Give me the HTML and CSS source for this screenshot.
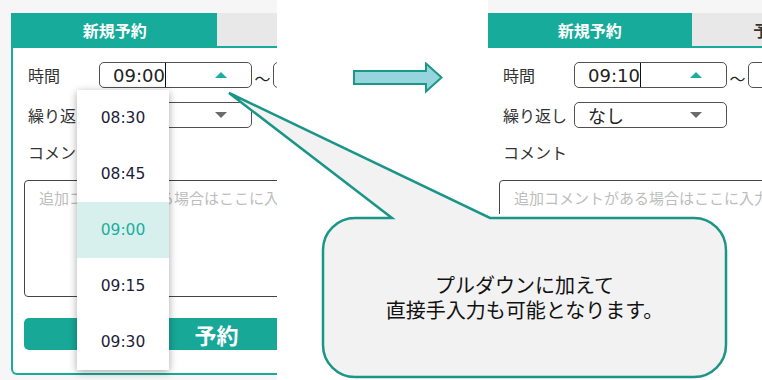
FILE: index.html
```html
<!DOCTYPE html>
<html lang="ja">
<head>
<meta charset="utf-8">
<title>予約フォーム</title>
<link rel="stylesheet" href="styles.css">
</head>
<body>
<div class="stage">
  <div class="shot shot-left">
    <div class="panel">
      <div class="tabs"><div class="tab active">新規予約</div><div class="tab">予約の確認</div></div>
      <div class="body">
        <div class="row">
          <span class="label">時間</span>
          <div class="field"><span class="val">09:00</span><span class="caret"></span><span class="tri up"></span></div>
          <span class="tilde">～</span>
          <div class="field end"></div>
        </div>
        <div class="row">
          <span class="label">繰り返し</span>
          <div class="field"><span class="val">なし</span><span class="tri down"></span></div>
        </div>
        <div class="label comment-label">コメント</div>
        <div class="textarea">追加コメントがある場合はここに入力</div>
        <button class="submit">予約</button>
      </div>
      <ul class="dropdown">
        <li>08:30</li>
        <li>08:45</li>
        <li class="sel">09:00</li>
        <li>09:15</li>
        <li>09:30</li>
      </ul>
    </div>
  </div>
  <div class="middle">
    <svg class="arrow" width="90" height="32" viewBox="0 0 90 32"><path d="M1 9 H73 V1.5 L88.5 15.5 L73 29.5 V22 H1 Z" fill="#96d5de" stroke="#1a988a" stroke-width="2" stroke-linejoin="miter"/></svg>
  </div>
  <div class="shot shot-right">
    <div class="panel">
      <div class="tabs"><div class="tab active">新規予約</div><div class="tab">予約の確認</div></div>
      <div class="body">
        <div class="row">
          <span class="label">時間</span>
          <div class="field"><span class="val">09:10</span><span class="caret"></span><span class="tri up"></span></div>
          <span class="tilde">～</span>
          <div class="field end"></div>
        </div>
        <div class="row">
          <span class="label">繰り返し</span>
          <div class="field"><span class="val">なし</span><span class="tri down"></span></div>
        </div>
        <div class="label comment-label">コメント</div>
        <div class="textarea">追加コメントがある場合はここに入力</div>
        <button class="submit">予約</button>
      </div>
    </div>
  </div>
</div>
<div class="callout-layer">
  <svg class="callout-shape" width="762" height="380" viewBox="0 0 762 380"><path d="M392 218 L229 93 L490 218 L694 218 A32 32 0 0 1 726 250 L726 345 A32 32 0 0 1 694 377 L355 377 A32 32 0 0 1 323 345 L323 250 A32 32 0 0 1 355 218 Z" fill="#f2f2f2" stroke="#1a9587" stroke-width="2.5" stroke-linejoin="miter"/></svg>
  <div class="callout-text">プルダウンに加えて<br>直接手入力も可能となります。</div>
</div>
</body>
</html>
```
FILE: styles.css
```css
body {
  margin: 0;
  width: 762px;
  height: 380px;
  overflow: hidden;
  position: relative;
  background: #fff;
  font-family: "Noto Sans CJK JP", sans-serif;
}
.stage {
  display: flex;
  align-items: flex-start;
  height: 380px;
}
.shot {
  height: 380px;
  overflow: hidden;
  box-sizing: border-box;
  padding-top: 13px;
  background: #f6f6f6;
}
.shot-left {
  width: 277px;
  flex: none;
  padding-left: 11px;
}
.middle {
  width: 211px;
  flex: none;
  box-sizing: border-box;
  padding: 62px 0 0 76px;
}
.arrow { display: block; }
.shot-right {
  flex: 1;
  min-width: 0;
  height: 214px;
}
.panel {
  position: relative;
  width: 411px;
  box-sizing: border-box;
  border: 2px solid #17ab9b;
  border-top: 0;
  border-radius: 0 0 6px 6px;
  background: #fff;
}
.shot-right .panel {
  border-left: 0;
  width: 409px;
}
.tabs {
  display: flex;
  height: 33px;
  border-bottom: 2px solid #17ab9b;
}
.tab {
  flex: 1;
  display: flex;
  align-items: center;
  justify-content: center;
  font-size: 16px;
  font-weight: 700;
  background: #e8e8e8;
  color: #333;
}
.tab.active {
  background: #17ab9b;
  color: #fff;
}
.body {
  padding: 14px 11px 23px;
}
.row {
  display: flex;
  align-items: center;
  height: 26px;
}
.row + .row { margin-top: 14px; }
.label {
  width: 75px;
  flex: none;
  box-sizing: border-box;
  padding-left: 4px;
  font-size: 16px;
  color: #333;
  white-space: nowrap;
}
.field {
  width: 153px;
  height: 26px;
  flex: none;
  box-sizing: border-box;
  border: 1.5px solid #505050;
  border-radius: 5px;
  display: flex;
  align-items: center;
  padding-left: 13px;
}
.field.end { width: 150px; }
.val {
  font-family: "DejaVu Sans", "Noto Sans CJK JP", sans-serif;
  font-size: 18px;
  color: #222;
}
.caret {
  align-self: stretch;
  border-left: 1.5px solid #111;
}
.tri {
  margin-left: auto;
  margin-right: 24px;
  width: 0;
  height: 0;
  border-left: 6px solid transparent;
  border-right: 6px solid transparent;
}
.tri.up { border-bottom: 6px solid #1aae9e; }
.tri.down { border-top: 6px solid #6a6a6a; }
.tilde {
  width: 21px;
  flex: none;
  text-align: center;
  font-size: 16px;
  color: #222;
  align-self: flex-end;
  line-height: 20px;
}
.comment-label {
  margin-top: 15px;
  line-height: 18px;
}
.textarea {
  margin-top: 19px;
  height: 117px;
  box-sizing: border-box;
  border: 1.5px solid #444;
  border-radius: 4px;
  padding: 6px 0 0 14px;
  font-size: 15px;
  color: #bdbdbd;
  white-space: nowrap;
  overflow: hidden;
}
.submit {
  display: block;
  width: 100%;
  margin-top: 21px;
  height: 32px;
  padding: 0;
  border: 0;
  border-radius: 5px;
  background: #17a898;
  color: #fff;
  font-family: inherit;
  font-size: 22px;
  font-weight: 700;
  line-height: 32px;
}
.dropdown {
  position: absolute;
  left: 64px;
  top: 77px;
  width: 92px;
  margin: 0;
  padding: 0;
  list-style: none;
  background: #fff;
  box-shadow: 0 2px 8px rgba(0, 0, 0, 0.35);
}
.dropdown li {
  height: 56px;
  display: flex;
  align-items: center;
  justify-content: center;
  font-family: "DejaVu Sans", sans-serif;
  font-size: 15.5px;
  color: #1d1d3a;
}
.dropdown li.sel {
  background: #d8f0ed;
  color: #1aae9e;
}
.callout-layer {
  position: absolute;
  inset: 0;
  pointer-events: none;
}
.callout-shape {
  position: absolute;
  left: 0;
  top: 0;
}
.callout-text {
  position: absolute;
  left: 323px;
  top: 218px;
  width: 403px;
  height: 157px;
  display: flex;
  align-items: center;
  justify-content: center;
  text-align: center;
  font-size: 20px;
  line-height: 25px;
  color: #111;
}
```
